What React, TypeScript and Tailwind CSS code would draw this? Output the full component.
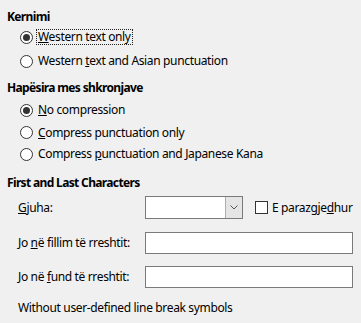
import { ReactNode } from 'react'

const font = {
  fontFamily: '"Segoe UI", "Noto Sans", "Open Sans", sans-serif',
  letterSpacing: '-0.35px',
}

const Radio = ({ checked }: { checked?: boolean }) => (
  <span className="flex h-[13px] w-[13px] shrink-0 items-center justify-center rounded-full border border-[#333] bg-white">
    {checked && <span className="h-[7px] w-[7px] rounded-full bg-[#333]" />}
  </span>
)

const RadioRow = ({
  checked,
  focused,
  className,
  children,
}: {
  checked?: boolean
  focused?: boolean
  className?: string
  children: ReactNode
}) => (
  <div className={`flex items-center pl-[20px] ${className ?? ''}`}>
    <Radio checked={checked} />
    <span
      className={`ml-[3px] leading-[14px] ${
        focused ? 'border border-dotted border-[#222] px-[1px]' : 'px-[2px]'
      }`}
    >
      {children}
    </span>
  </div>
)

const Heading = ({ children, className }: { children: ReactNode; className?: string }) => (
  <div className={`flex items-center pl-[7px] font-bold tracking-[-0.65px] ${className ?? ''}`}>
    {children}
  </div>
)

const TextField = () => <div className="h-[22px] w-[208px] border border-[#7a7a7a] bg-white" />

const App = () => {
  return (
    <div
      className="h-[323px] w-[361px] overflow-hidden bg-[#f0f0f0] pt-[6px] text-[12px] text-black"
      style={font}
    >
      <Heading className="h-[22px]">Kernimi</Heading>
      <RadioRow checked focused className="mt-[-3px] h-[24px]">
        <u>W</u>estern text only
      </RadioRow>
      <RadioRow className="h-[24px]">
        Western <u>t</u>ext and Asian punctuation
      </RadioRow>
      <Heading className="mt-[4px] h-[22px]">Hapësira mes shkronjave</Heading>
      <RadioRow checked className="h-[22px]">
        <u>N</u>o compression
      </RadioRow>
      <RadioRow className="h-[22px] pt-[1px]">
        <u>C</u>ompress punctuation only
      </RadioRow>
      <RadioRow className="h-[22px]">
        Compress <u>p</u>unctuation and Japanese Kana
      </RadioRow>
      <Heading className="mt-[7px] h-[22px]">First and Last Characters</Heading>

      <div className="mt-[2px] flex h-[23px] items-center">
        <span className="w-[145px] pl-[18px]">
          <u>G</u>juha:
        </span>
        <div className="flex h-[23px] w-[98px] border border-[#7a7a7a] bg-white">
          <div className="flex-1" />
          <div className="flex w-[17px] items-center justify-center border-l border-[#adadad] bg-[#e5e5e5]">
            <svg width="8" height="5" viewBox="0 0 8 5">
              <path d="M0.5 0.5 L4 4 L7.5 0.5" fill="none" stroke="#555" strokeWidth="1" />
            </svg>
          </div>
        </div>
        <span className="ml-[12px] h-[13px] w-[13px] border border-[#333] bg-white" />
        <span className="ml-[4px]">
          E parazgje<u>d</u>hur
        </span>
      </div>

      <div className="mt-[13px] flex h-[22px] items-center">
        <span className="w-[145px] pl-[18px]">
          Jo <u>n</u>ë fillim të rreshtit:
        </span>
        <TextField />
      </div>
      <div className="mt-[12px] flex h-[22px] items-center">
        <span className="w-[145px] pl-[18px]">
          Jo në <u>f</u>und të rreshtit:
        </span>
        <TextField />
      </div>
      <div className="mt-[9px] flex h-[22px] items-center pl-[18px]">
        Without user-defined line break symbols
      </div>
    </div>
  )
}

export default App
